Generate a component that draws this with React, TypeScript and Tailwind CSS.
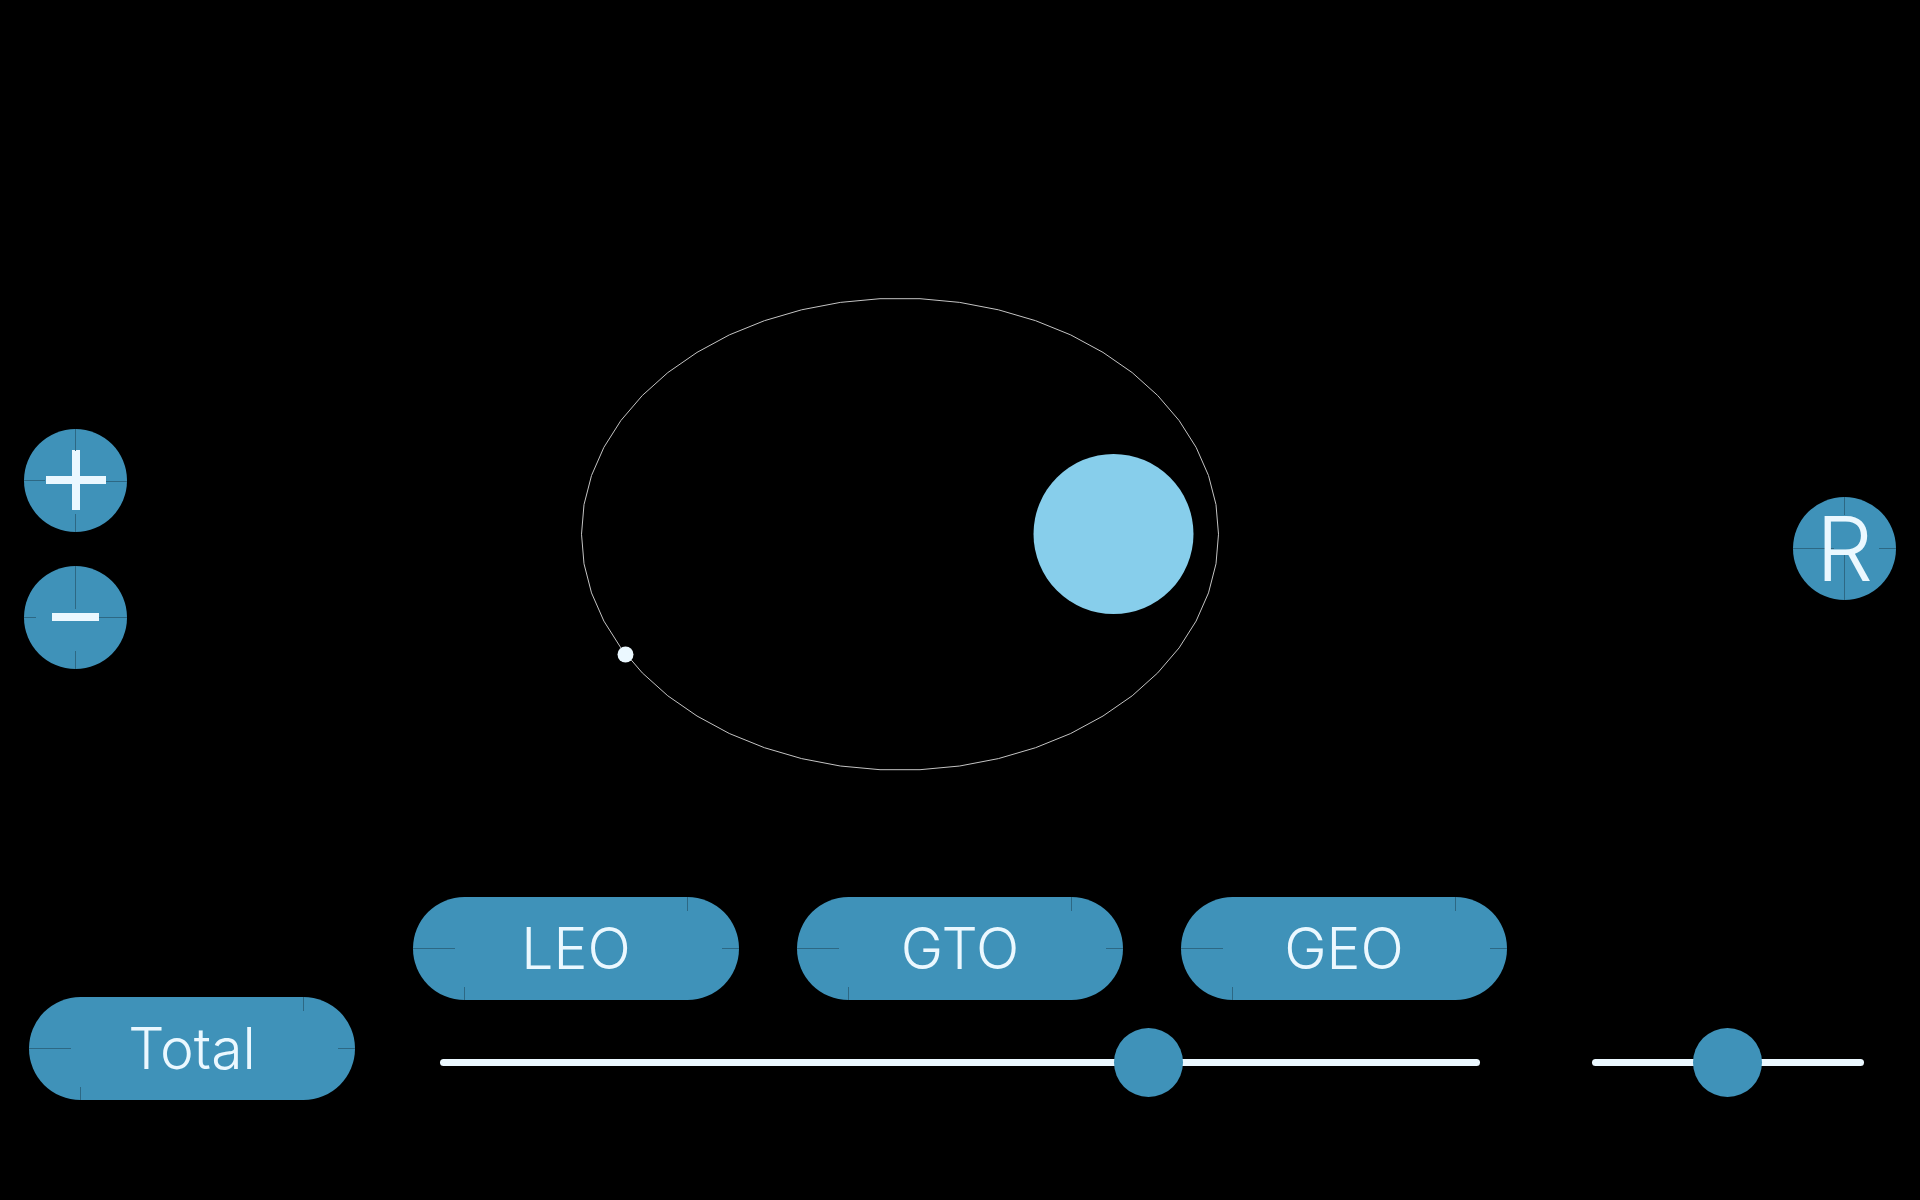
import { useState } from "react";

type Line = [number, number, number, number];

const SEGMENTS = 50;
const orbit = Array.from({ length: SEGMENTS }, (_, i) => {
  const angle = (i * 2 * Math.PI) / SEGMENTS;
  return `${(900 + 318.5 * Math.cos(angle)).toFixed(1)},${(534.2 + 236 * Math.sin(angle)).toFixed(1)}`;
}).join(" ");

const pillSeams: Line[] = [
  [0, 51.5, 42, 51.5],
  [309, 51.5, 326, 51.5],
  [51.5, 90, 51.5, 103],
  [274.5, 0, 274.5, 14],
];
const plusSeams: Line[] = [
  [51.5, 0, 51.5, 22],
  [51.5, 85, 51.5, 103],
  [0, 51.5, 21, 51.5],
  [82, 52.5, 103, 52.5],
];
const minusSeams: Line[] = [
  [51.5, 0, 51.5, 43],
  [51.5, 85, 51.5, 103],
  [0, 51.5, 12, 51.5],
  [75, 51.5, 103, 51.5],
];
const resetSeams: Line[] = [
  [51.5, 0, 51.5, 18],
  [51.5, 58, 51.5, 103],
  [0, 51.5, 41, 51.5],
  [86, 51.5, 103, 51.5],
];

function Seams({ lines, width }: { lines: Line[]; width: number }) {
  return (
    <svg
      aria-hidden="true"
      className="pointer-events-none absolute inset-0 h-full w-full"
      viewBox={`0 0 ${width} 103`}
      stroke="#2d6884"
      strokeWidth="1"
    >
      {lines.map(([x1, y1, x2, y2]) => (
        <line key={`${x1}-${y1}-${x2}`} x1={x1} y1={y1} x2={x2} y2={y2} />
      ))}
    </svg>
  );
}

function PillButton({ label }: { label: string }) {
  return (
    <button
      type="button"
      className="relative flex h-[103px] w-[326px] shrink-0 items-center justify-center rounded-full bg-[#3f92b9] text-[57px] leading-[68px] font-light text-[#ebf8ff]"
    >
      <Seams lines={pillSeams} width={326} />
      {label}
    </button>
  );
}

function RoundButton({ label, seams, children }: { label: string; seams: Line[]; children: React.ReactNode }) {
  return (
    <button
      type="button"
      aria-label={label}
      className="relative flex h-[103px] w-[103px] shrink-0 items-center justify-center rounded-full bg-[#3f92b9] text-[90px] leading-[108px] font-light text-[#ebf8ff]"
    >
      <Seams lines={seams} width={103} />
      {children}
    </button>
  );
}

function Slider({ label, initial }: { label: string; initial: number }) {
  const [value, setValue] = useState(initial);
  return (
    <input
      type="range"
      aria-label={label}
      min={0}
      max={1000}
      value={value}
      onChange={(e) => setValue(Number(e.target.value))}
      className="h-[75px] w-full cursor-pointer appearance-none bg-transparent [&::-webkit-slider-runnable-track]:h-[7px] [&::-webkit-slider-runnable-track]:rounded-full [&::-webkit-slider-runnable-track]:bg-[#ebf8ff] [&::-webkit-slider-thumb]:-mt-[31px] [&::-webkit-slider-thumb]:h-[69px] [&::-webkit-slider-thumb]:w-[69px] [&::-webkit-slider-thumb]:appearance-none [&::-webkit-slider-thumb]:rounded-full [&::-webkit-slider-thumb]:bg-[#3f92b9]"
    />
  );
}

export default function App() {
  return (
    <main className="flex min-h-screen flex-col bg-black font-['Inter','Lato',sans-serif]">
      <section className="flex flex-1 items-center px-6 pt-[200px]">
        <div className="flex flex-col gap-[34px]">
          <RoundButton label="Zoom in" seams={plusSeams}>
            <svg aria-hidden="true" className="h-[60px] w-[60px]" viewBox="0 0 60 60" stroke="currentColor" strokeWidth="8">
              <path d="M0 30H60M30 0V60" />
            </svg>
          </RoundButton>
          <RoundButton label="Zoom out" seams={minusSeams}>
            <svg aria-hidden="true" className="h-[60px] w-[60px]" viewBox="0 0 60 60" stroke="currentColor" strokeWidth="8">
              <path d="M6 30H53" />
            </svg>
          </RoundButton>
        </div>
        <svg role="img" aria-label="Orbit" className="h-full min-w-0 flex-1" viewBox="127 200 1666 697">
          <polygon points={orbit} fill="none" stroke="#c4c4c4" strokeWidth="1" />
          <circle cx="1113.5" cy="534" r="80" fill="#87ceeb" />
          <circle cx="625.5" cy="654.5" r="8" fill="#ebf8ff" />
        </svg>
        <RoundButton label="R" seams={resetSeams}>
          <span className="relative">R</span>
        </RoundButton>
      </section>

      <section className="flex items-end pr-14 pb-[100px] pl-[29px]">
        <PillButton label="Total" />
        <div className="mr-[85px] ml-[58px] flex min-w-0 flex-1 flex-col gap-[25px]">
          <div className="flex justify-between">
            <PillButton label="LEO" />
            <PillButton label="GTO" />
            <PillButton label="GEO" />
          </div>
          <div className="flex px-[27px]">
            <Slider label="Orbit position" initial={694} />
          </div>
        </div>
        <div className="flex w-[272px]">
          <Slider label="Speed" initial={499} />
        </div>
      </section>
    </main>
  );
}
